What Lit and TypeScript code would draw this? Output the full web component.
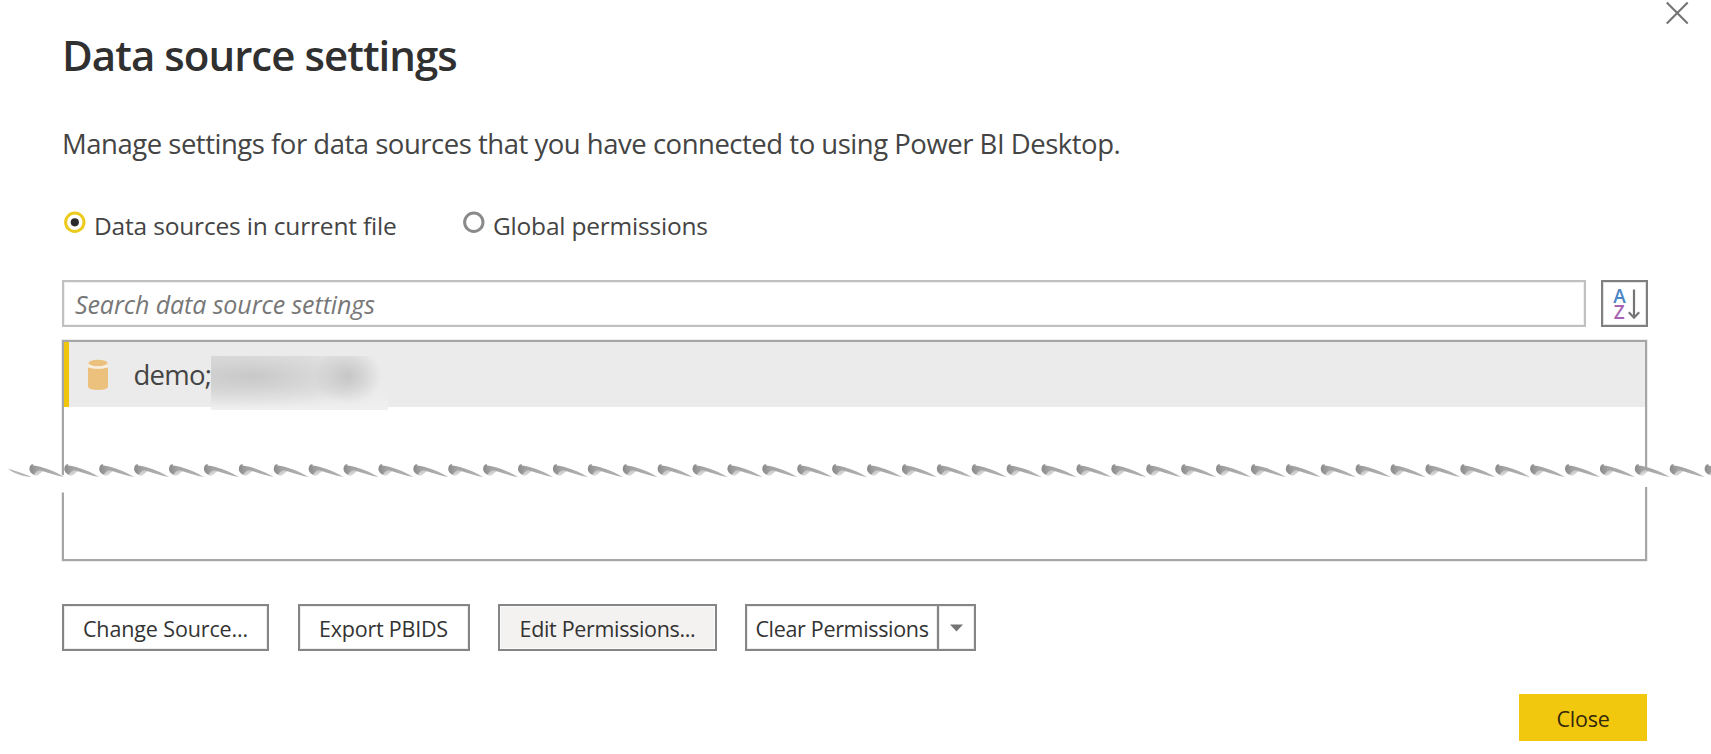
import { LitElement, html, css, svg } from "lit";
import { customElement, state } from "lit/decorators.js";

const TOOTH_PERIOD = 34.9;
const TOOTH_COUNT = 49;

@customElement("torn-edge")
class TornEdge extends LitElement {
  static styles = css`
    :host { display: block; }
    svg { display: block; }
  `;
  render() {
    const teeth = Array.from({ length: TOOTH_COUNT }, (_, i) => svg`
      <g transform="translate(${(29 + i * TOOTH_PERIOD).toFixed(1)} 0)">
        <path d="M2 6 L16 9.3 Q12 11 10 13.5 Q7 16 4.5 13.5 Z" fill="url(#soft)"/>
        <path d="M4 4.6 C10 5.2 20 8 28 12 L35.5 16 C28 15 20 11.8 12 9.4 C9 8.6 7 10 5 13.8 C2 12.5 .4 10.5 .4 8 C.6 4.6 2 3 4.6 3.4 Z" fill="url(#edge)"/>
      </g>`);
    return html`<svg width="1711" height="34" viewBox="0 0 1711 34">
      <defs>
        <linearGradient id="edge" x1="0" x2="1" y1="0" y2="0">
          <stop offset="0" stop-color="#8a8a8a"/>
          <stop offset=".22" stop-color="#a2a2a2"/>
          <stop offset="1" stop-color="#b4b4b4"/>
        </linearGradient>
        <linearGradient id="soft" x1="0" x2=".6" y1="0" y2="1">
          <stop offset="0" stop-color="#9c9c9c"/>
          <stop offset="1" stop-color="#e4e4e4"/>
        </linearGradient>
      </defs>
      <rect x="56" y="14" width="14" height="17.5" fill="#fff"/>
      <rect x="1640" y="8" width="14" height="18" fill="#fff"/>
      <path d="M8 7.5 L20 11.5 L31.5 15.8 C24 15.8 13 12.5 8 7.5 Z" fill="#b4b4b4"/>
      ${teeth}
    </svg>`;
  }
}

@customElement("radio-option")
class RadioOption extends LitElement {
  static properties = { label: { type: String }, checked: { type: Boolean } };
  declare label: string;
  declare checked: boolean;
  static styles = css`
    :host { display: flex; align-items: flex-start; line-height: 36px; white-space: nowrap; }
    svg { display: block; width: 22px; height: 22px; margin-top: 3px; margin-right: 8px; flex: none; }
  `;
  render() {
    return html`
      <svg viewBox="0 0 22 22">
        <circle cx="10.8" cy="11.3" r="9.2" fill="#fff" stroke=${this.checked ? "#eccb1e" : "#8a8a8a"} stroke-width="3"/>
        ${this.checked ? svg`<circle cx="10.8" cy="11.3" r="4.1" fill="#2b2b2b"/>` : null}
      </svg>
      <span>${this.label}</span>`;
  }
}

@customElement("app-root")
class AppRoot extends LitElement {
  @state() private scope = "file";

  static styles = css`
    :host {
      display: block;
      position: relative;
      box-sizing: border-box;
      height: 754px;
      overflow: hidden;
      padding: 25px 63px 0 62px;
      background: #fff;
      color: #444;
      font-family: "Open Sans", "Noto Sans", sans-serif;
    }
    .dismiss { position: absolute; right: 22px; top: 1px; display: block; }
    h1 { margin: 0; font-size: 42px; line-height: 60px; font-weight: 600; letter-spacing: -0.95px; color: #303030; }
    p { margin: 39px 0 0; font-size: 27.5px; line-height: 40px; letter-spacing: -0.484px; white-space: nowrap; }
    .scopes { display: flex; margin-top: 44px; font-size: 24.5px; padding-left: 2px; }
    .scopes .first { width: 399px; letter-spacing: -0.18px; }
    .scopes .second { letter-spacing: -0.21px; }
    .search-row { display: flex; gap: 15px; margin-top: 36px; height: 47px; }
    .search {
      box-sizing: border-box; flex: 1; border: 2px solid #c0c0c0; box-shadow: inset 0 0 0 1px #f0f0f0; padding: 1px 11px 0;
      font-size: 25px; line-height: 42px; font-style: italic; letter-spacing: -0.09px; color: #777;
    }
    .sort { box-sizing: border-box; width: 47px; border: 2px solid #808080; box-shadow: inset 0 0 0 1px #e2e2e2; }
    .sort svg { display: block; }
    .sort text { font-family: "Open Sans", sans-serif; font-size: 19px; font-weight: 600; }
    .list { position: relative; box-sizing: border-box; height: 221px; margin-top: 13px; margin-right: 1px; border: 2px solid #a6a6a6; box-shadow: 0 0 0 .5px #d8d8d8; }
    .row { display: flex; align-items: center; height: 65px; background: #ebebeb; font-size: 27.5px; }
    .bar { width: 5px; height: 65px; background: #f0c60c; }
    .db { margin-left: 18.5px; display: block; }
    .name { margin-left: 26px; letter-spacing: -0.75px; width: 77px; line-height: 60px; padding-top: 1px; }
    .redacted { align-self: flex-start; margin-top: 13.5px; width: 177px; height: 54px; background: #ebebeb; overflow: hidden; }
    .redacted i { display: block; width: 177px; height: 54px;
      background:
        radial-gradient(ellipse 34px 28px at 137px 20px, rgba(182,182,182,.6), rgba(190,190,190,.35) 50%, transparent),
        radial-gradient(ellipse 130px 32px at 40px 20px, rgba(190,190,190,.7), rgba(200,200,200,.4) 50%, transparent),
        linear-gradient(to bottom, transparent 60%, #f0f0f0 100%),
        linear-gradient(to right, rgba(205,205,205,.45), rgba(205,205,205,.2) 80%, transparent 95%); }
    .tear { position: absolute; left: -64px; top: 118.5px; }
    .actions { display: flex; margin-top: 43px; height: 47px; }
    .btn {
      box-sizing: border-box; height: 47px; border: 2px solid #858585; box-shadow: inset 0 0 0 1px #ececec; padding: 1.5px 0 0;
      text-align: center; font-size: 21.5px; line-height: 42px; color: #333; background: #fff; white-space: nowrap;
    }
    .change { width: 207px; letter-spacing: -0.13px; }
    .export { width: 172px; margin-left: 28.5px; letter-spacing: -0.23px; }
    .edit { width: 219px; margin-left: 28.5px; letter-spacing: -0.33px; background: #f3f2f1; box-shadow: inset 0 0 0 1px #fafafa; }
    .clear { width: 194px; margin-left: 28px; letter-spacing: -0.33px; }
    .more { width: 37px; border-left: 0; display: grid; place-items: center; padding: 0 1px 0 0; }
    .footer { display: flex; justify-content: flex-end; margin-top: 43px; margin-right: 1px; }
    .close { box-sizing: border-box; width: 128px; height: 47px; padding-top: 1px; background: #f2c80f; color: #33290a; text-align: center; font-size: 21.5px; line-height: 47px; letter-spacing: -0.2px; }
  `;

  render() {
    return html`
      <svg class="dismiss" width="24" height="24" viewBox="0 0 24 24">
        <path d="M1.8 1.5 L22.7 22.6 M22.7 1.5 L1.8 22.6" stroke="#747474" stroke-width="2.1" fill="none"/>
      </svg>
      <h1>Data source settings</h1>
      <p>Manage settings for data sources that you have connected to using Power BI Desktop.</p>
      <div class="scopes">
        <radio-option class="first" label="Data sources in current file" ?checked=${this.scope === "file"} @click=${() => (this.scope = "file")}></radio-option>
        <radio-option class="second" label="Global permissions" ?checked=${this.scope === "global"} @click=${() => (this.scope = "global")}></radio-option>
      </div>
      <div class="search-row">
        <div class="search">Search data source settings</div>
        <div class="sort">
          <svg width="43" height="43" viewBox="0 0 43 43">
            <text x="10.2" y="20.6" fill="#4a86c5">A</text>
            <text x="10.8" y="36.8" fill="#a763b3">Z</text>
            <path d="M31 7.5 V35.5 M25.8 30.3 L31 35.7 L36.2 30.3" fill="none" stroke="#757575" stroke-width="2.2"/>
          </svg>
        </div>
      </div>
      <div class="list">
        <div class="row">
          <div class="bar"></div>
          <svg class="db" width="20" height="32" viewBox="0 0 20 32">
            <path d="M0 8.2 Q10 11 20 8.2 V28 Q19 31 10 31 Q1 31 0 28 Z" fill="#ecc17d"/>
            <ellipse cx="10" cy="4" rx="9.6" ry="3.2" fill="#ecc17d"/>
            <path d="M0 5 Q10 10.5 20 5 V8.2 Q10 11.5 0 8.2 Z" fill="#f8eedb"/>
          </svg>
          <span class="name">demo;</span>
          <div class="redacted"><i></i></div>
        </div>
        <torn-edge class="tear"></torn-edge>
      </div>
      <div class="actions">
        <div class="btn change">Change Source...</div>
        <div class="btn export">Export PBIDS</div>
        <div class="btn edit">Edit Permissions...</div>
        <div class="btn clear">Clear Permissions</div>
        <div class="btn more">
          <svg width="13" height="8" viewBox="0 0 13 8"><path d="M0 .4 H13 L6.5 7.4 Z" fill="#757575"/></svg>
        </div>
      </div>
      <div class="footer"><div class="close">Close</div></div>
    `;
  }
}
